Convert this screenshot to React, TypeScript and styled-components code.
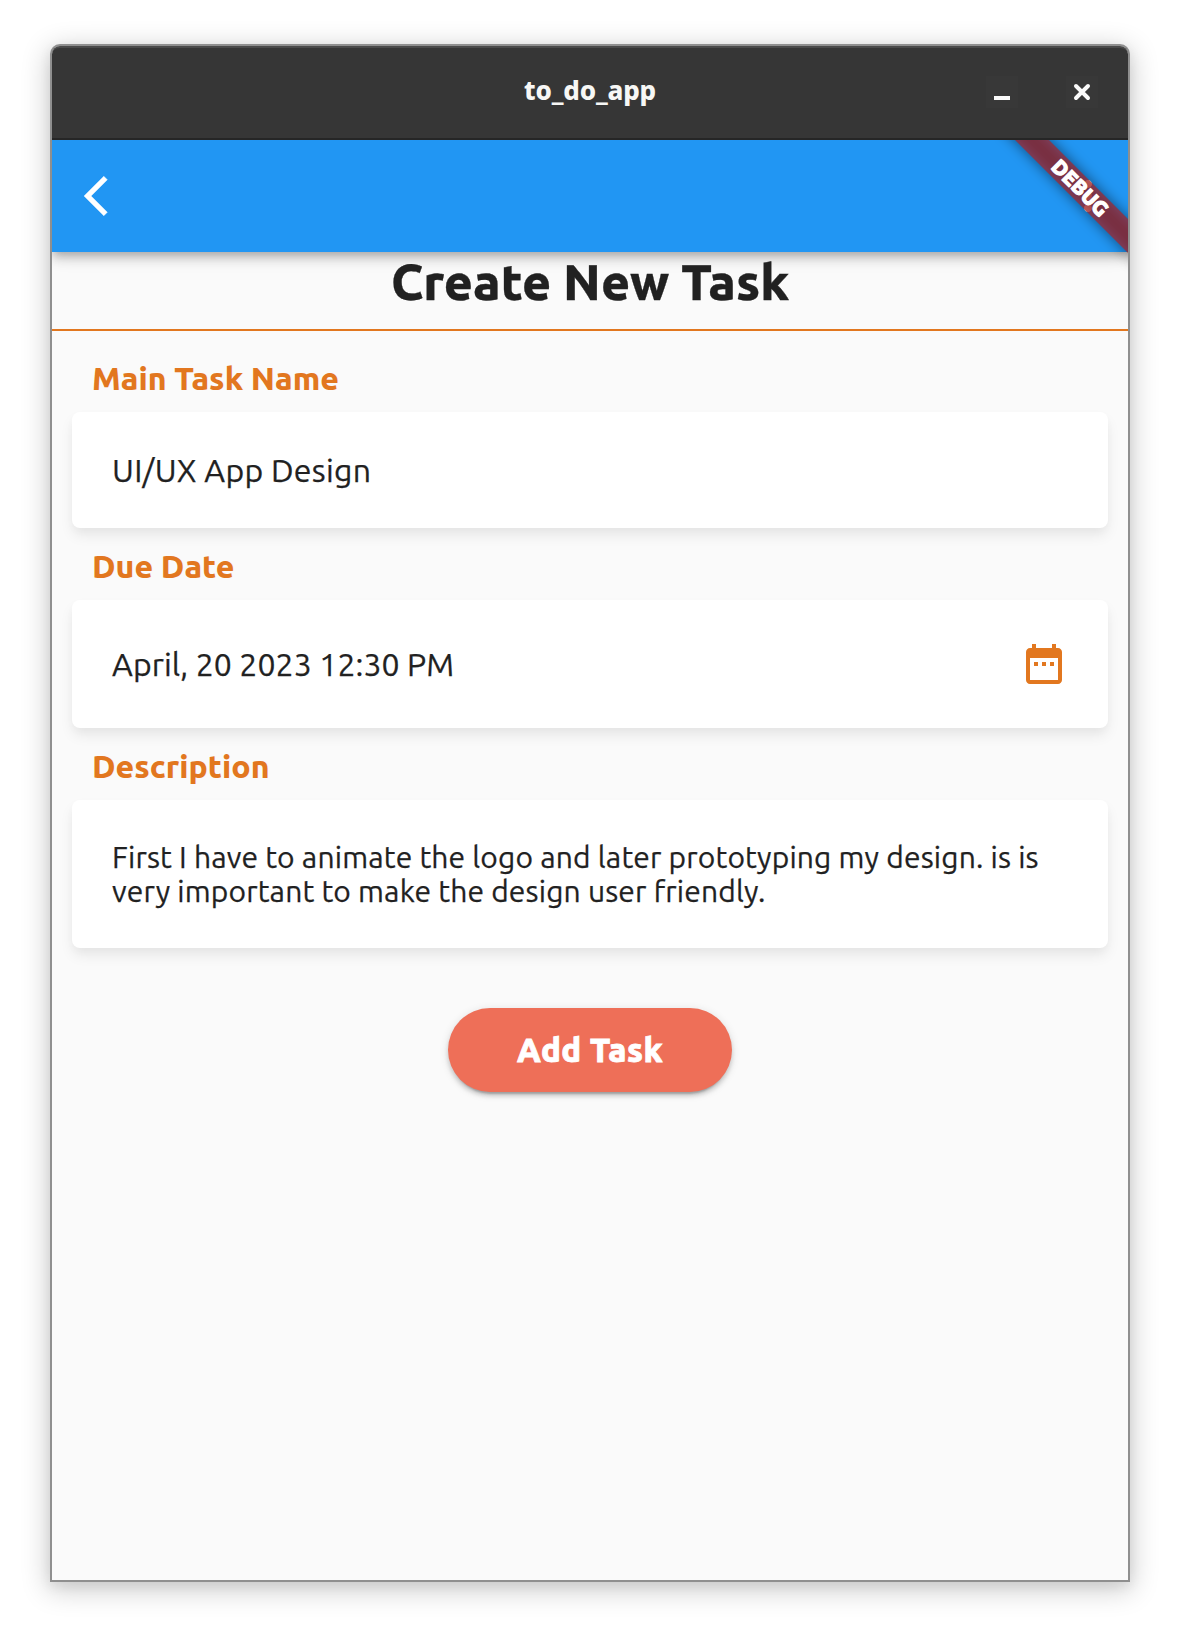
import React from 'react';
import styled, { createGlobalStyle } from 'styled-components';

const accent = '#e2771f';
const coral = '#ee6f58';

const GlobalStyle = createGlobalStyle`
  * {
    box-sizing: border-box;
  }
  body {
    margin: 0;
    background: #ffffff;
    font-family: Ubuntu, "Noto Sans", "Open Sans", sans-serif;
    color: #212121;
  }
`;

const Desktop = styled.main`
  width: 1180px;
  height: 1638px;
  padding: 44px 50px 56px;
  overflow: hidden;
`;

const Window = styled.section`
  display: flex;
  flex-direction: column;
  height: 1538px;
  border: 2px solid #8f8f8f;
  border-radius: 10px 10px 0 0;
  background: #fafafa;
  box-shadow: 0 6px 28px 2px rgba(0, 0, 0, 0.2), 0 4px 12px 1px rgba(0, 0, 0, 0.06);
`;

const TitleBar = styled.header`
  display: grid;
  grid-template-columns: 1fr auto 1fr;
  align-items: center;
  height: 94px;
  padding: 0 30px;
  flex: none;
  background: #363636;
  border-top: 2px solid #4a4a4a;
  border-bottom: 2px solid #262626;
  border-radius: 8px 8px 0 0;
`;

const WindowTitle = styled.h1`
  grid-column: 2;
  margin: 0;
  padding-bottom: 7px;
  font-family: "Noto Sans", "Open Sans", sans-serif;
  font-size: 26px;
  line-height: 36px;
  font-weight: 800;
  letter-spacing: -0.15px;
  color: #f7f7f5;
`;

const WindowControls = styled.div`
  display: flex;
  justify-content: flex-end;
  gap: 48px;
  padding-bottom: 2px;
`;

const ControlButton = styled.button`
  display: flex;
  width: 32px;
  height: 32px;
  padding: 0;
  border: 0;
  background: #383838;
`;

const AppView = styled.div`
  position: relative;
  display: flex;
  flex-direction: column;
  flex: 1;
  overflow: hidden;
`;

const AppBar = styled.nav`
  display: flex;
  align-items: center;
  justify-content: space-between;
  flex: none;
  height: 112px;
  padding: 0 16px 0 32px;
  background: #2196f3;
  box-shadow: 0 4px 8px -2px rgba(0, 0, 0, 0.2), 0 8px 10px rgba(0, 0, 0, 0.12),
    0 2px 20px rgba(0, 0, 0, 0.1);
`;

const IconButton = styled.button`
  display: flex;
  padding: 0;
  border: 0;
  background: none;
`;

const DebugCorner = styled.div`
  position: absolute;
  top: 0;
  right: 0;
  width: 170px;
  height: 170px;
  overflow: hidden;
  pointer-events: none;
`;

const DebugStrip = styled.div`
  position: absolute;
  top: 35.7px;
  left: 22px;
  width: 200px;
  height: 24px;
  transform: rotate(45deg);
`;

const DebugShadow = styled.div`
  position: absolute;
  inset: 0;
  background: rgba(0, 0, 0, 0.5);
  filter: blur(7px);
`;

const DebugLabel = styled.div`
  position: relative;
  height: 24px;
  background: rgba(183, 28, 28, 0.627);
  color: #ffffff;
  text-align: center;
  font-size: 20.4px;
  line-height: 24px;
  font-weight: 900;
  letter-spacing: 0.2px;
  -webkit-text-stroke: 1.2px #ffffff;
`;

const PageHeader = styled.div`
  flex: none;
  height: 79px;
  border-bottom: 2px solid ${accent};
  text-align: center;
`;

const PageTitle = styled.h2`
  margin: 0;
  font-size: 50px;
  line-height: 58px;
  font-weight: 800;
  -webkit-text-stroke: 0.3px #212121;
`;

const Form = styled.form`
  display: flex;
  flex-direction: column;
  align-items: center;
  padding: 25px 20px 0;
`;

const Label = styled.label`
  align-self: stretch;
  height: 56px;
  padding-left: 20px;
  font-size: 32px;
  line-height: 44px;
  font-weight: 800;
  color: ${accent};
`;

const FieldCard = styled.div<{ $height: number }>`
  display: flex;
  align-items: center;
  justify-content: space-between;
  align-self: stretch;
  height: ${(p) => p.$height}px;
  margin-bottom: 16px;
  padding: 0 40px;
  border-radius: 8px;
  background: #ffffff;
  box-shadow: 0 8px 14px -1px rgba(0, 0, 0, 0.08), 0 4px 10px rgba(0, 0, 0, 0.02);
`;

const FieldText = styled.span<{ $tracking: number }>`
  font-size: 32px;
  line-height: 38px;
  letter-spacing: ${(p) => p.$tracking}px;
  white-space: nowrap;
  -webkit-text-stroke: 0.25px #212121;
`;

const Description = styled.p`
  margin: 0;
  font-size: 30px;
  line-height: 34px;
  letter-spacing: 0.155px;
  -webkit-text-stroke: 0.25px #212121;
`;

const AddButton = styled.button`
  width: 284px;
  height: 84px;
  margin-top: 44px;
  padding: 0 0 1px;
  border: 0;
  border-radius: 42px;
  background: ${coral};
  box-shadow: 0 6px 2px -4px rgba(0, 0, 0, 0.2), 0 4px 4px rgba(0, 0, 0, 0.14),
    0 2px 10px rgba(0, 0, 0, 0.12);
  color: #ffffff;
  font-family: inherit;
  font-size: 33px;
  font-weight: 800;
  letter-spacing: 0.45px;
  -webkit-text-stroke: 0.8px #ffffff;
`;

const MinimizeIcon = () => (
  <svg width="32" height="32" viewBox="0 0 32 32">
    <path d="M8 20h16v4H8z" fill="#fafafa" />
  </svg>
);

const CloseIcon = () => (
  <svg width="32" height="32" viewBox="0 0 32 32">
    <path d="M10 10l12 12M22 10L10 22" stroke="#fafafa" strokeWidth="4" strokeLinecap="round" />
  </svg>
);

const BackIcon = () => (
  <svg width="48" height="48" viewBox="0 0 24 24">
    <path
      d="M11.67 3.87L9.9 2.1 0 12l9.9 9.9 1.77-1.77L3.54 12z"
      fill="#ffffff"
      stroke="#ffffff"
      strokeWidth="0.2"
    />
  </svg>
);

const MoreIcon = () => (
  <svg width="48" height="48" viewBox="0 0 24 24" fill="#ffffff">
    <path d="M12 8c1.1 0 2-.9 2-2s-.9-2-2-2-2 .9-2 2 .9 2 2 2zm0 2c-1.1 0-2 .9-2 2s.9 2 2 2 2-.9 2-2-.9-2-2-2zm0 6c-1.1 0-2 .9-2 2s.9 2 2 2 2-.9 2-2-.9-2-2-2z" />
  </svg>
);

const CalendarIcon = () => (
  <svg width="48" height="48" viewBox="0 0 24 24" fill={accent}>
    <path d="M9 11H7v2h2v-2zm4 0h-2v2h2v-2zm4 0h-2v2h2v-2zm2-7h-1V2h-2v2H8V2H6v2H5c-1.11 0-1.99.9-1.99 2L3 20c0 1.1.89 2 2 2h14c1.1 0 2-.9 2-2V6c0-1.1-.9-2-2-2zm0 16H5V9h14v11z" />
  </svg>
);

export default function App() {
  return (
    <>
      <GlobalStyle />
      <Desktop>
        <Window>
          <TitleBar>
            <WindowTitle>to_do_app</WindowTitle>
            <WindowControls>
              <ControlButton type="button" aria-label="Minimize">
                <MinimizeIcon />
              </ControlButton>
              <ControlButton type="button" aria-label="Close">
                <CloseIcon />
              </ControlButton>
            </WindowControls>
          </TitleBar>
          <AppView>
            <AppBar>
              <IconButton type="button" aria-label="Back">
                <BackIcon />
              </IconButton>
              <IconButton type="button" aria-label="More">
                <MoreIcon />
              </IconButton>
            </AppBar>
            <PageHeader>
              <PageTitle>Create New Task</PageTitle>
            </PageHeader>
            <Form>
              <Label>Main Task Name</Label>
              <FieldCard $height={116}>
                <FieldText $tracking={0.27}>UI/UX App Design</FieldText>
              </FieldCard>
              <Label>Due Date</Label>
              <FieldCard $height={128}>
                <FieldText $tracking={0.08}>April, 20 2023 12:30 PM</FieldText>
                <CalendarIcon />
              </FieldCard>
              <Label>Description</Label>
              <FieldCard $height={148}>
                <Description>
                  First I have to animate the logo and later prototyping my design. is is
                  very important to make the design user friendly.
                </Description>
              </FieldCard>
              <AddButton type="button">Add Task</AddButton>
            </Form>
            <DebugCorner>
              <DebugStrip>
                <DebugShadow />
                <DebugLabel>DEBUG</DebugLabel>
              </DebugStrip>
            </DebugCorner>
          </AppView>
        </Window>
      </Desktop>
    </>
  );
}
